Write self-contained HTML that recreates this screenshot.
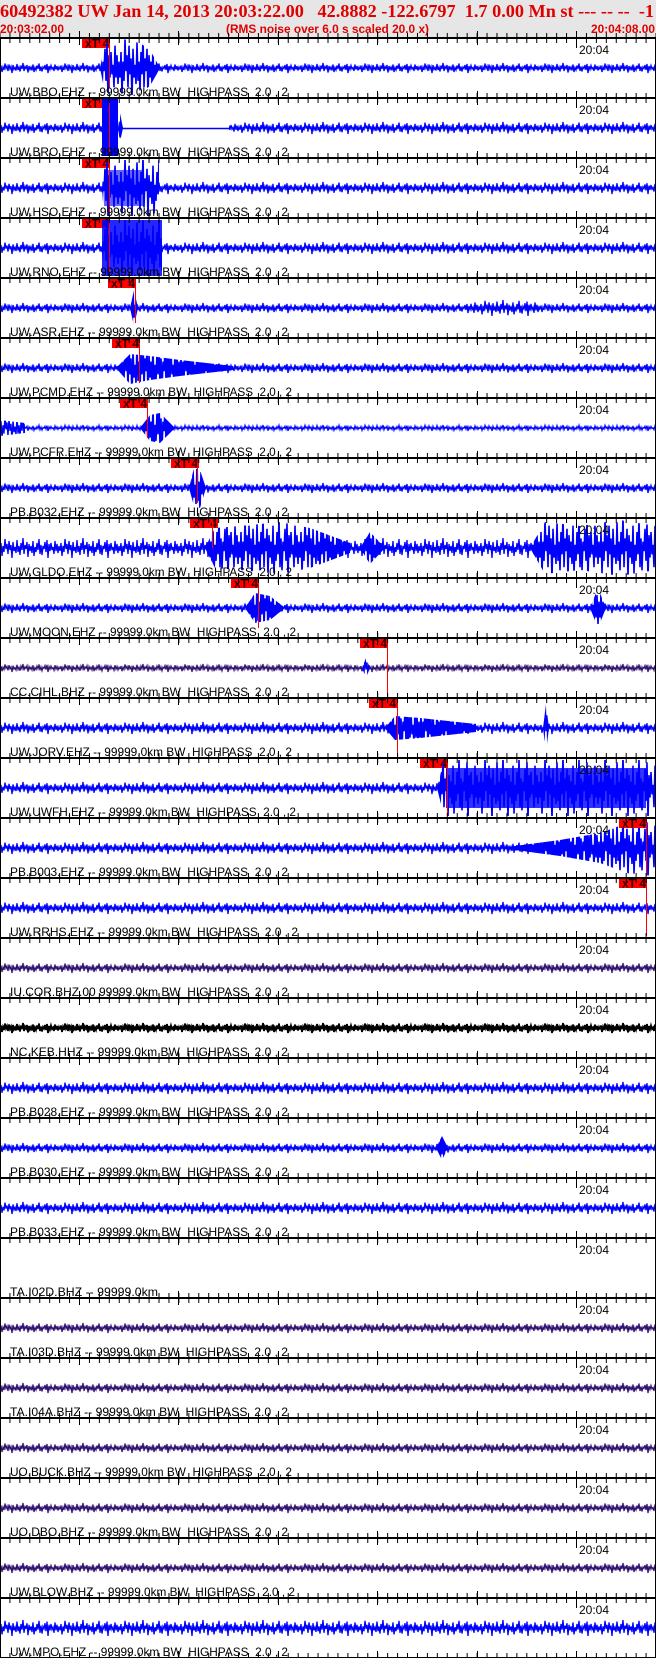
<!DOCTYPE html>
<html><head><meta charset="utf-8"><style>
html,body{margin:0;padding:0;background:#fff;width:656px;height:1658px;overflow:hidden}
svg{display:block}
text{font-family:"Liberation Sans",Arial,sans-serif}
.lb text{white-space:pre}
</style></head><body>
<svg width="656" height="1658" viewBox="0 0 656 1658" xmlns="http://www.w3.org/2000/svg" xmlns:xlink="http://www.w3.org/1999/xlink">
<defs>
<polyline id="w" fill="none" vector-effect="non-scaling-stroke" points="0,3 1,-5 2,8 3,-2 4,4 5,-9 6,1 7,-4 8,6 9,-7 10,2 11,-3 12,10 13,-6 14,3 15,-1 16,5 17,-8 18,4 19,-2 20,7 21,-5 22,2 23,-10 24,6 25,-3 26,1 27,-6 28,9 29,-4 30,3 31,-2 32,5 33,-7 34,8 35,-1 36,4 37,-5 38,2 39,-9 40,6 41,-3 42,7 43,-2 44,1 45,-6 46,4 47,-8 48,10 49,-4 50,3 51,-5 52,2 53,-1 54,6 55,-7 56,3 57,-4 58,5 59,-2 60,3"/>
<pattern id="pb3" width="60" height="60" patternUnits="userSpaceOnUse"><use xlink:href="#w" stroke="#0000ff" stroke-width="1.2" transform="translate(0,30) scale(1,0.3)"/></pattern>
<pattern id="pb5" width="60" height="60" patternUnits="userSpaceOnUse"><use xlink:href="#w" stroke="#0000ff" stroke-width="1.3" transform="translate(0,30) scale(1,0.5)"/></pattern>
<pattern id="pb6" width="60" height="60" patternUnits="userSpaceOnUse"><use xlink:href="#w" stroke="#0000ff" stroke-width="1.3" transform="translate(0,30) scale(1,0.6)"/></pattern>
<pattern id="pb8" width="60" height="60" patternUnits="userSpaceOnUse"><use xlink:href="#w" stroke="#0000ff" stroke-width="1.3" transform="translate(0,30) scale(1,0.8)"/></pattern>
<pattern id="pb10" width="60" height="60" patternUnits="userSpaceOnUse"><use xlink:href="#w" stroke="#0000ff" stroke-width="1.3" transform="translate(0,30) scale(1,1.0)"/></pattern>
<pattern id="pb12" width="60" height="60" patternUnits="userSpaceOnUse"><use xlink:href="#w" stroke="#0000ff" stroke-width="1.3" transform="translate(0,30) scale(1,1.4)"/></pattern>
<pattern id="pb30" width="60" height="60" patternUnits="userSpaceOnUse"><use xlink:href="#w" stroke="#0000ff" stroke-width="1.6" transform="translate(0,30) scale(1,3.2)"/></pattern>
<pattern id="pp4" width="60" height="60" patternUnits="userSpaceOnUse"><use xlink:href="#w" stroke="#2e1070" stroke-width="1.2" transform="translate(0,30) scale(1,0.4)"/></pattern>
<pattern id="pp5" width="60" height="60" patternUnits="userSpaceOnUse"><use xlink:href="#w" stroke="#2e1070" stroke-width="1.2" transform="translate(0,30) scale(1,0.5)"/></pattern>
<pattern id="pk5" width="60" height="60" patternUnits="userSpaceOnUse"><use xlink:href="#w" stroke="#000" stroke-width="1.8" transform="translate(0,30) scale(1,0.5)"/></pattern>
<pattern id="tk" x="9.42" width="9.94" height="20" y="-10" patternUnits="userSpaceOnUse"><rect x="0" y="5" width="1" height="10" fill="#000"/></pattern>
<g id="sep">
<rect x="0" y="-1" width="656" height="2" fill="#000"/>
<rect x="0" y="-5" width="656" height="10" fill="url(#tk)"/>
<path d="M79.5,-7V7M178.5,-7V7M278.5,-7V7M377.5,-7V7M477.5,-7V7M576.5,-7V10" stroke="#000" stroke-width="1"/>
</g>
<g id="mk"><rect x="0" y="0" width="28" height="10" fill="#ff0000"/><text x="3" y="9.5" font-size="12" fill="#300" style="font-weight:bold">xT 4</text></g>
</defs>

<!-- header -->
<rect x="0" y="0" width="656" height="38" fill="#e6e6e6"/>
<text x="0" y="17" style="font-family:'Liberation Serif',serif;font-weight:bold;white-space:pre" font-size="18" fill="#e00000" textLength="654" lengthAdjust="spacingAndGlyphs">60492382 UW Jan 14, 2013 20:03:22.00   42.8882 -122.6797  1.7 0.00 Mn st --- -- --  -1</text>
<text x="0" y="33" font-weight="bold" font-size="12" fill="#e00000" textLength="64" lengthAdjust="spacingAndGlyphs">20:03:02.00</text>
<text x="226" y="33" font-weight="bold" font-size="12" fill="#e00000" textLength="203" lengthAdjust="spacingAndGlyphs">(RMS noise over 6.0 s scaled 20.0 x)</text>
<text x="591" y="33" font-weight="bold" font-size="12" fill="#e00000" textLength="64" lengthAdjust="spacingAndGlyphs">20:04:08.00</text>

<!-- panels -->
<g transform="translate(0,38)">
<rect x="0" y="0" width="656" height="58" fill="url(#pb5)"/>
<use xlink:href="#mk" x="82" y="0"/>
<polygon points="100,30 104,10 110,0 118,0 128,2 140,5 150,12 159,28 159,32 150,48 140,55 128,58 118,58 110,58 104,50" fill="url(#pb30)"/>
<line x1="109.5" y1="0" x2="109.5" y2="50" stroke="#f00"/>
</g>
<g transform="translate(0,98)">
<rect x="0" y="0" width="656" height="58" fill="url(#pb6)"/>
<rect x="119" y="12" width="110" height="36" fill="#fff"/>
<line x1="119" y1="30.5" x2="229" y2="30.5" stroke="#00f" stroke-width="1.5"/>
<use xlink:href="#mk" x="82" y="0"/>
<rect x="102" y="0" width="16" height="58" fill="#00f"/>
<polygon points="118,30 120,15 123,30 120,44" fill="url(#pb30)"/>
<line x1="109.5" y1="0" x2="109.5" y2="58" stroke="#f00"/>
</g>
<g transform="translate(0,158)">
<rect x="0" y="0" width="656" height="58" fill="url(#pb6)"/>
<use xlink:href="#mk" x="82" y="0"/>
<polygon points="102,30 104,2 159,2 159,58 104,58" fill="url(#pb30)"/>
<rect x="104" y="12" width="40" height="36" fill="#00f" opacity="0.6"/>
<line x1="109.5" y1="0" x2="109.5" y2="55" stroke="#f00"/>
</g>
<g transform="translate(0,218)">
<rect x="0" y="0" width="656" height="58" fill="url(#pb6)"/>
<use xlink:href="#mk" x="82" y="0"/>
<rect x="102" y="2" width="60" height="56" fill="#00f" opacity="0.85"/>
<polygon points="102,30 104,2 162,2 162,58 104,58" fill="url(#pb30)"/>
<line x1="109.5" y1="0" x2="109.5" y2="55" stroke="#f00"/>
</g>
<g transform="translate(0,278)">
<rect x="0" y="0" width="656" height="58" fill="url(#pb5)"/>
<rect x="470" y="0" width="70" height="58" fill="url(#pb8)"/>
<use xlink:href="#mk" x="108" y="0"/>
<polygon points="130,30 134,12 138,30 134,48" fill="url(#pb30)"/>
<line x1="135.5" y1="0" x2="135.5" y2="45" stroke="#f00"/>
</g>
<g transform="translate(0,338)">
<rect x="0" y="0" width="656" height="58" fill="url(#pb5)"/>
<use xlink:href="#mk" x="112" y="0"/>
<polygon points="116,30 130,16 150,18 180,22 233,28 233,32 180,38 150,42 130,46" fill="url(#pb30)"/>
<line x1="139.5" y1="0" x2="139.5" y2="45" stroke="#f00"/>
</g>
<g transform="translate(0,398)">
<rect x="0" y="0" width="656" height="58" fill="url(#pb3)"/>
<polygon points="0,22 25,25 25,35 0,38" fill="url(#pb12)"/>
<use xlink:href="#mk" x="120" y="0"/>
<polygon points="140,30 150,17 160,15 175,30 160,45 150,43" fill="url(#pb30)"/>
<line x1="147.5" y1="0" x2="147.5" y2="40" stroke="#f00"/>
</g>
<g transform="translate(0,458)">
<rect x="0" y="0" width="656" height="58" fill="url(#pb5)"/>
<use xlink:href="#mk" x="171" y="0"/>
<polygon points="189,30 194,10 200,12 206,30 200,50 194,48" fill="url(#pb30)"/>
<line x1="197.5" y1="0" x2="197.5" y2="45" stroke="#f00"/>
</g>
<g transform="translate(0,518)">
<rect x="0" y="0" width="656" height="58" fill="url(#pb10)"/>
<use xlink:href="#mk" x="190" y="0"/>
<polygon points="205,30 215,10 240,8 280,4 310,10 350,25 350,35 310,50 280,56 240,52 215,50" fill="url(#pb30)"/>
<polygon points="360,30 370,14 385,30 370,46" fill="url(#pb30)"/>
<polygon points="530,30 545,4 580,8 620,2 656,8 656,52 620,58 580,52 545,56" fill="url(#pb30)"/>
<line x1="212.5" y1="0" x2="212.5" y2="30" stroke="#f00"/>
</g>
<g transform="translate(0,578)">
<rect x="0" y="0" width="656" height="58" fill="url(#pb5)"/>
<use xlink:href="#mk" x="231" y="0"/>
<polygon points="245,30 255,15 270,18 285,30 270,42 255,45" fill="url(#pb30)"/>
<polygon points="590,30 598,10 606,30 598,50" fill="url(#pb30)"/>
<line x1="258.5" y1="0" x2="258.5" y2="50" stroke="#f00"/>
</g>
<g transform="translate(0,638)">
<rect x="0" y="0" width="656" height="58" fill="url(#pp4)"/>
<use xlink:href="#mk" x="360" y="0"/>
<polygon points="362,30 366,20 370,30 366,40" fill="url(#pb12)"/>
<line x1="387.5" y1="0" x2="387.5" y2="58" stroke="#f00"/>
</g>
<g transform="translate(0,698)">
<rect x="0" y="0" width="656" height="58" fill="url(#pb6)"/>
<use xlink:href="#mk" x="369" y="0"/>
<polygon points="385,30 395,18 420,20 476,26 476,34 420,40 395,42" fill="url(#pb30)"/>
<polygon points="543,30 546,6 549,30 546,54" fill="url(#pb30)"/>
<line x1="397.5" y1="0" x2="397.5" y2="58" stroke="#f00"/>
</g>
<g transform="translate(0,758)">
<rect x="0" y="0" width="656" height="58" fill="url(#pb6)"/>
<use xlink:href="#mk" x="420" y="0"/>
<polygon points="437,30 444,2 656,2 656,58 444,58" fill="url(#pb30)"/>
<rect x="446" y="10" width="200" height="40" fill="#00f" opacity="0.8"/>
<line x1="447.5" y1="0" x2="447.5" y2="58" stroke="#f00"/>
</g>
<g transform="translate(0,818)">
<rect x="0" y="0" width="656" height="58" fill="url(#pb6)"/>
<polygon points="500,30 560,22 600,15 630,4 656,2 656,58 630,56 600,45 560,38" fill="url(#pb30)"/>
<use xlink:href="#mk" x="619" y="0"/>
<line x1="646.5" y1="0" x2="646.5" y2="58" stroke="#f00"/>
</g>
<g transform="translate(0,878)">
<rect x="0" y="0" width="656" height="58" fill="url(#pb6)"/>
<use xlink:href="#mk" x="619" y="0"/>
<line x1="646.5" y1="0" x2="646.5" y2="58" stroke="#f00"/>
</g>
<g transform="translate(0,938)"><rect x="0" y="0" width="656" height="58" fill="url(#pp5)"/></g>
<g transform="translate(0,998)"><rect x="0" y="0" width="656" height="58" fill="url(#pk5)"/></g>
<g transform="translate(0,1058)"><rect x="0" y="0" width="656" height="58" fill="url(#pb6)"/></g>
<g transform="translate(0,1118)"><rect x="0" y="0" width="656" height="58" fill="url(#pb5)"/>
<polygon points="436,30 442,18 448,30 442,42" fill="url(#pb30)"/></g>
<g transform="translate(0,1178)"><rect x="0" y="0" width="656" height="58" fill="url(#pb6)"/></g>
<g transform="translate(0,1298)"><rect x="0" y="0" width="656" height="58" fill="url(#pp5)"/></g>
<g transform="translate(0,1358)"><rect x="0" y="0" width="656" height="58" fill="url(#pp5)"/></g>
<g transform="translate(0,1418)"><rect x="0" y="0" width="656" height="58" fill="url(#pp5)"/></g>
<g transform="translate(0,1478)"><rect x="0" y="0" width="656" height="58" fill="url(#pp5)"/></g>
<g transform="translate(0,1538)"><rect x="0" y="0" width="656" height="58" fill="url(#pp5)"/></g>
<g transform="translate(0,1598)"><rect x="0" y="0" width="656" height="58" fill="url(#pb8)"/></g>

<!-- separators -->
<use xlink:href="#sep" y="38"/><use xlink:href="#sep" y="98"/><use xlink:href="#sep" y="158"/><use xlink:href="#sep" y="218"/><use xlink:href="#sep" y="278"/><use xlink:href="#sep" y="338"/><use xlink:href="#sep" y="398"/><use xlink:href="#sep" y="458"/><use xlink:href="#sep" y="518"/><use xlink:href="#sep" y="578"/><use xlink:href="#sep" y="638"/><use xlink:href="#sep" y="698"/><use xlink:href="#sep" y="758"/><use xlink:href="#sep" y="818"/><use xlink:href="#sep" y="878"/><use xlink:href="#sep" y="938"/><use xlink:href="#sep" y="998"/><use xlink:href="#sep" y="1058"/><use xlink:href="#sep" y="1118"/><use xlink:href="#sep" y="1178"/><use xlink:href="#sep" y="1238"/><use xlink:href="#sep" y="1298"/><use xlink:href="#sep" y="1358"/><use xlink:href="#sep" y="1418"/><use xlink:href="#sep" y="1478"/><use xlink:href="#sep" y="1538"/><use xlink:href="#sep" y="1598"/><use xlink:href="#sep" y="1658"/>
<rect x="0" y="38" width="1" height="1620" fill="#000"/>
<rect x="655" y="38" width="1" height="1620" fill="#000"/>

<!-- 20:04 labels -->
<g font-size="12" fill="#000">
<text x="579" y="54">20:04</text><text x="579" y="114">20:04</text><text x="579" y="174">20:04</text><text x="579" y="234">20:04</text><text x="579" y="294">20:04</text><text x="579" y="354">20:04</text><text x="579" y="414">20:04</text><text x="579" y="474">20:04</text><text x="579" y="534">20:04</text><text x="579" y="594">20:04</text><text x="579" y="654">20:04</text><text x="579" y="714">20:04</text><text x="579" y="774">20:04</text><text x="579" y="834">20:04</text><text x="579" y="894">20:04</text><text x="579" y="954">20:04</text><text x="579" y="1014">20:04</text><text x="579" y="1074">20:04</text><text x="579" y="1134">20:04</text><text x="579" y="1194">20:04</text><text x="579" y="1254">20:04</text><text x="579" y="1314">20:04</text><text x="579" y="1374">20:04</text><text x="579" y="1434">20:04</text><text x="579" y="1494">20:04</text><text x="579" y="1554">20:04</text><text x="579" y="1614">20:04</text>
</g>

<!-- station labels -->
<g class="lb" font-size="12" fill="#000">
<text x="10" y="96" textLength="278" lengthAdjust="spacingAndGlyphs">UW.BBO.EHZ -- 99999.0km BW  HIGHPASS  2.0 , 2</text>
<text x="10" y="156" textLength="278" lengthAdjust="spacingAndGlyphs">UW.BRO.EHZ -- 99999.0km BW  HIGHPASS  2.0 , 2</text>
<text x="10" y="216" textLength="278" lengthAdjust="spacingAndGlyphs">UW.HSO.EHZ -- 99999.0km BW  HIGHPASS  2.0 , 2</text>
<text x="10" y="276" textLength="278" lengthAdjust="spacingAndGlyphs">UW.RNO.EHZ -- 99999.0km BW  HIGHPASS  2.0 , 2</text>
<text x="10" y="336" textLength="278" lengthAdjust="spacingAndGlyphs">UW.ASR.EHZ -- 99999.0km BW  HIGHPASS  2.0 , 2</text>
<text x="10" y="396" textLength="282" lengthAdjust="spacingAndGlyphs">UW.PCMD.EHZ -- 99999.0km BW  HIGHPASS  2.0 , 2</text>
<text x="10" y="456" textLength="282" lengthAdjust="spacingAndGlyphs">UW.PCFR.EHZ -- 99999.0km BW  HIGHPASS  2.0 , 2</text>
<text x="10" y="516" textLength="278" lengthAdjust="spacingAndGlyphs">PB.B032.EHZ -- 99999.0km BW  HIGHPASS  2.0 , 2</text>
<text x="10" y="576" textLength="282" lengthAdjust="spacingAndGlyphs">UW.GLDO.EHZ -- 99999.0km BW  HIGHPASS  2.0 , 2</text>
<text x="10" y="636" textLength="286" lengthAdjust="spacingAndGlyphs">UW.MOON.EHZ -- 99999.0km BW  HIGHPASS  2.0 , 2</text>
<text x="10" y="696" textLength="278" lengthAdjust="spacingAndGlyphs">CC.CIHL.BHZ -- 99999.0km BW  HIGHPASS  2.0 , 2</text>
<text x="10" y="756" textLength="282" lengthAdjust="spacingAndGlyphs">UW.JORV.EHZ -- 99999.0km BW  HIGHPASS  2.0 , 2</text>
<text x="10" y="816" textLength="286" lengthAdjust="spacingAndGlyphs">UW.UWFH.EHZ -- 99999.0km BW  HIGHPASS  2.0 , 2</text>
<text x="10" y="876" textLength="278" lengthAdjust="spacingAndGlyphs">PB.B003.EHZ -- 99999.0km BW  HIGHPASS  2.0 , 2</text>
<text x="10" y="936" textLength="288" lengthAdjust="spacingAndGlyphs">UW.RRHS.EHZ -- 99999.0km BW  HIGHPASS  2.0 , 2</text>
<text x="10" y="996" textLength="278" lengthAdjust="spacingAndGlyphs">IU.COR.BHZ.00 99999.0km BW  HIGHPASS  2.0 , 2</text>
<text x="10" y="1056" textLength="278" lengthAdjust="spacingAndGlyphs">NC.KEB.HHZ -- 99999.0km BW  HIGHPASS  2.0 , 2</text>
<text x="10" y="1116" textLength="278" lengthAdjust="spacingAndGlyphs">PB.B028.EHZ -- 99999.0km BW  HIGHPASS  2.0 , 2</text>
<text x="10" y="1176" textLength="278" lengthAdjust="spacingAndGlyphs">PB.B030.EHZ -- 99999.0km BW  HIGHPASS  2.0 , 2</text>
<text x="10" y="1236" textLength="278" lengthAdjust="spacingAndGlyphs">PB.B033.EHZ -- 99999.0km BW  HIGHPASS  2.0 , 2</text>
<text x="10" y="1296" textLength="148" lengthAdjust="spacingAndGlyphs">TA.I02D.BHZ -- 99999.0km</text>
<text x="10" y="1356" textLength="278" lengthAdjust="spacingAndGlyphs">TA.I03D.BHZ -- 99999.0km BW  HIGHPASS  2.0 , 2</text>
<text x="10" y="1416" textLength="278" lengthAdjust="spacingAndGlyphs">TA.I04A.BHZ -- 99999.0km BW  HIGHPASS  2.0 , 2</text>
<text x="10" y="1476" textLength="282" lengthAdjust="spacingAndGlyphs">UO.BUCK.BHZ -- 99999.0km BW  HIGHPASS  2.0 , 2</text>
<text x="10" y="1536" textLength="278" lengthAdjust="spacingAndGlyphs">UO.DBO.BHZ -- 99999.0km BW  HIGHPASS  2.0 , 2</text>
<text x="10" y="1596" textLength="285" lengthAdjust="spacingAndGlyphs">UW.BLOW.BHZ -- 99999.0km BW  HIGHPASS  2.0 , 2</text>
<text x="10" y="1656" textLength="278" lengthAdjust="spacingAndGlyphs">UW.MPO.EHZ -- 99999.0km BW  HIGHPASS  2.0 , 2</text>
</g>
</svg>
</body></html>
